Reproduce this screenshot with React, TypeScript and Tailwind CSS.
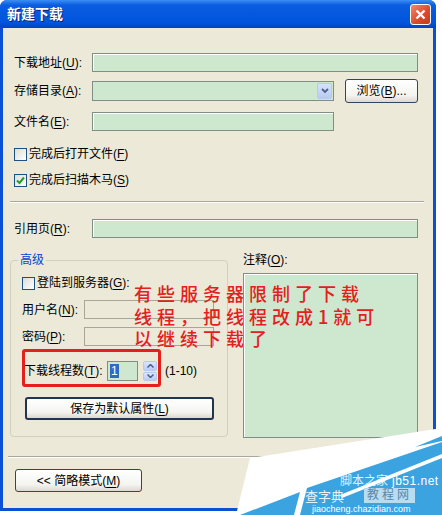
import React from "react";

const Key = ({ text, k, end = ":" }: { text: string; k: string; end?: string }) => (
  <span className="whitespace-nowrap">
    {text}(<span className="underline underline-offset-2">{k}</span>){end}
  </span>
);

const Field = ({ className = "" }: { className?: string }) => (
  <div className={`h-[19px] border border-[#7f8f86] bg-[#cde8cf] shadow-[inset_1px_1px_0_#ffffff] ${className}`} />
);

const XpButton = ({ children, className = "" }: { children: React.ReactNode; className?: string }) => (
  <button
    className={`flex items-center justify-center rounded-[3px] bg-[linear-gradient(to_bottom,#ffffff,#f4f4f0_70%,#dcd8cc)] text-[12px] text-black ${className}`}
  >
    {children}
  </button>
);

const Check = ({ checked = false }: { checked?: boolean }) => (
  <span className="flex h-[13px] w-[13px] shrink-0 items-center justify-center border border-[#1c5180] bg-[linear-gradient(135deg,#dcdcd7,#ffffff)]">
    {checked && (
      <svg width="9" height="9" viewBox="0 0 9 9">
        <path d="M1 4.5 L3.5 7 L8 1.5" fill="none" stroke="#21a121" strokeWidth="2" />
      </svg>
    )}
  </span>
);

// site watermark in the bottom-right corner
const Watermark = () => (
  <div className="absolute left-[230px] top-[428px] h-[87px] w-[212px]">
    <svg width="212" height="87" viewBox="0 0 212 87" className="absolute inset-0">
      <polygon points="6,87 20,30 212,0 212,87" fill="#ffffff" />
      <polygon points="70,87 77,60 212,14 212,87" fill="#3ba4e0" />
      <polygon points="10,87 70,64 64,87" fill="#3ba4e0" />
      <polygon points="185,19 212,8 212,13" fill="#3ba4e0" />
      <polygon points="110,67 212,26 212,30 112,70" fill="#ffffff" />
    </svg>
    <span className="absolute left-[110px] top-[46px] text-[12px] leading-[14px] text-white/85">脚本之家</span>
    <span className="absolute left-[162px] top-[46px] text-[12px] leading-[14px] tracking-[0.5px] text-white">jb51.net</span>
    <span className="absolute left-[75px] top-[61px] text-[13px] leading-[15px] text-[#e6f2fa]">查字典</span>
    <span className="absolute left-[134px] top-[60px] bg-[#b9dcef] px-[3px] text-[12px] leading-[15px] tracking-[3px] text-[#5a86a8]">教程网</span>
    <span className="absolute left-[82px] top-[76px] text-[9px] leading-[10px] text-white">jiaocheng.chazidian.com</span>
  </div>
);

export default function App() {
  return (
    <div className="relative h-[515px] w-[442px] overflow-hidden bg-white font-['Liberation_Sans','Noto_Sans_CJK_SC',sans-serif] text-[12px] text-black">
      <div className="flex h-[511px] w-[436px] flex-col rounded-t-[7px] bg-[#0b4fd4]">
        {/* title bar */}
        <div className="flex h-[28px] shrink-0 items-center justify-between rounded-t-[7px] bg-[linear-gradient(to_bottom,#3d8ef5,#0a5de0_18%,#0054dd_80%,#0044c0)] pl-[7px] pr-[5px]">
          <span className="text-[14px] font-bold text-white [text-shadow:1px_1px_0_#0a1e6e]">新建下载</span>
          <div className="flex h-[21px] w-[21px] items-center justify-center rounded-[3px] border border-white bg-[linear-gradient(135deg,#f08a6a,#d9482a_60%,#c23c1e)]">
            <svg width="11" height="11" viewBox="0 0 11 11">
              <path d="M1.5 1.5 L9.5 9.5 M9.5 1.5 L1.5 9.5" stroke="#ffffff" strokeWidth="2.4" />
            </svg>
          </div>
        </div>

        {/* client area */}
        <div className="mx-[3px] mb-[3px] flex flex-1 flex-col bg-[#ece9d8] px-[11px]">
          <div className="mt-[25px] flex h-[19px] items-center pr-[4px]">
            <span className="w-[78px]"><Key text="下载地址" k="U" /></span>
            <Field className="flex-1" />
          </div>

          <div className="mt-[7px] flex h-[24px] items-center">
            <span className="w-[78px]"><Key text="存储目录" k="A" /></span>
            <div className="flex h-[20px] w-[242px] items-center justify-end border border-[#7f8f86] bg-[#cde8cf] pr-[1px]">
              <div className="flex h-[16px] w-[15px] items-center justify-center rounded-[2px] border border-[#b8c9ef] bg-[linear-gradient(to_bottom,#d6e2fb,#b7cbf5)]">
                <svg width="8" height="6" viewBox="0 0 8 6">
                  <path d="M1 1 L4 4 L7 1" fill="none" stroke="#4d6185" strokeWidth="1.8" />
                </svg>
              </div>
            </div>
            <XpButton className="ml-[11px] h-[24px] w-[73px] border border-[#32475e]">
              浏览(<span className="underline underline-offset-2">B</span>)...
            </XpButton>
          </div>

          <div className="mt-[9px] flex h-[19px] items-center">
            <span className="w-[78px]"><Key text="文件名" k="E" /></span>
            <Field className="w-[242px]" />
          </div>

          <div className="mt-[13px] flex h-[20px] items-center gap-[2px]">
            <Check />
            <Key text="完成后打开文件" k="F" end="" />
          </div>
          <div className="mt-[6px] flex h-[20px] items-center gap-[2px]">
            <Check checked />
            <Key text="完成后扫描木马" k="S" end="" />
          </div>

          <div className="ml-[-4px] mr-[-2px] mt-[11px] border-t border-b border-t-[#aca899] border-b-white" />

          <div className="mt-[16px] flex h-[19px] items-center pr-[4px]">
            <span className="w-[78px]"><Key text="引用页" k="R" /></span>
            <Field className="flex-1" />
          </div>

          <div className="mt-[15px] flex items-start">
            <fieldset className="ml-[-4px] w-[218px] rounded-[4px] border border-[#d0d0bf] pb-[16px] pl-[11px]">
              <legend className="ml-[-4px] px-[2px] leading-[14px] text-[#0046d5]">高级</legend>
              <div className="mt-[6px] flex h-[20px] items-center gap-[2px]">
                <Check />
                <Key text="登陆到服务器" k="G" />
              </div>
              <div className="mt-[7px] flex h-[19px] items-center">
                <span className="w-[62px]"><Key text="用户名" k="N" /></span>
                <div className="h-[19px] w-[130px] border border-[#a8a698] bg-[#ece9d8]" />
              </div>
              <div className="mt-[8px] flex h-[19px] items-center">
                <span className="w-[62px]"><Key text="密码" k="P" /></span>
                <div className="h-[19px] w-[130px] border border-[#a8a698] bg-[#ece9d8]" />
              </div>
              <div className="relative mt-[15px] flex h-[20px] items-center pl-[2px]">
                <span className="w-[83px]"><Key text="下载线程数" k="T" /></span>
                <div className="flex h-[20px] w-[31px] items-center border border-[#7f8f86] bg-[#cde8cf] pl-[2px]">
                  <span className="bg-[#316ac5] px-[1px] leading-[14px] text-white">1</span>
                </div>
                <div className="ml-[5px] flex h-[20px] w-[14px] flex-col gap-[1px]">
                  <div className="flex flex-1 items-center justify-center rounded-[2px] border border-[#b8c9ef] bg-[linear-gradient(to_bottom,#dce6fb,#b9ccf5)]">
                    <svg width="7" height="4" viewBox="0 0 7 4"><path d="M0.5 3.5 L3.5 0.5 L6.5 3.5" fill="none" stroke="#4d6185" strokeWidth="1.5" /></svg>
                  </div>
                  <div className="flex flex-1 items-center justify-center rounded-[2px] border border-[#b8c9ef] bg-[linear-gradient(to_bottom,#dce6fb,#b9ccf5)]">
                    <svg width="7" height="4" viewBox="0 0 7 4"><path d="M0.5 0.5 L3.5 3.5 L6.5 0.5" fill="none" stroke="#4d6185" strokeWidth="1.5" /></svg>
                  </div>
                </div>
                <span className="ml-[8px]">(1-10)</span>
                <div className="absolute left-0 top-[-12px] h-[38px] w-[139px] rounded-[3px] border-[3px] border-[#e3201b]" />
              </div>
              <XpButton className="ml-[3px] mt-[16px] h-[23px] w-[189px] border-2 border-[#1f3550]">
                保存为默认属性(<span className="underline underline-offset-2">L</span>)
              </XpButton>
            </fieldset>

            <div className="ml-[15px] flex flex-col">
              <span className="leading-[14px]"><Key text="注释" k="O" /></span>
              <div className="mt-[6px] h-[165px] w-[175px] border border-[#7f8f86] bg-[#cde8cf] shadow-[inset_1px_1px_0_#ffffff]" />
            </div>
          </div>

          <div className="ml-[-6px] mr-[-11px] mt-[18px] border-t border-b border-t-[#aca899] border-b-white" />

          <XpButton className="ml-[1px] mt-[11px] h-[23px] w-[127px] border border-[#32475e]">
            &lt;&lt; 简略模式(<span className="underline underline-offset-2">M</span>)
          </XpButton>
        </div>
      </div>

      {/* red handwritten annotation */}
      <div className="absolute left-[134px] top-[282px] font-['Noto_Sans_CJK_SC',sans-serif] text-[18px] font-medium leading-[22.5px] tracking-[5px] text-[#e3201b]">
        <div>有些服务器限制了下载</div>
        <div>线程，把线程改成1就可</div>
        <div>以继续下载了</div>
      </div>

      <Watermark />
    </div>
  );
}
